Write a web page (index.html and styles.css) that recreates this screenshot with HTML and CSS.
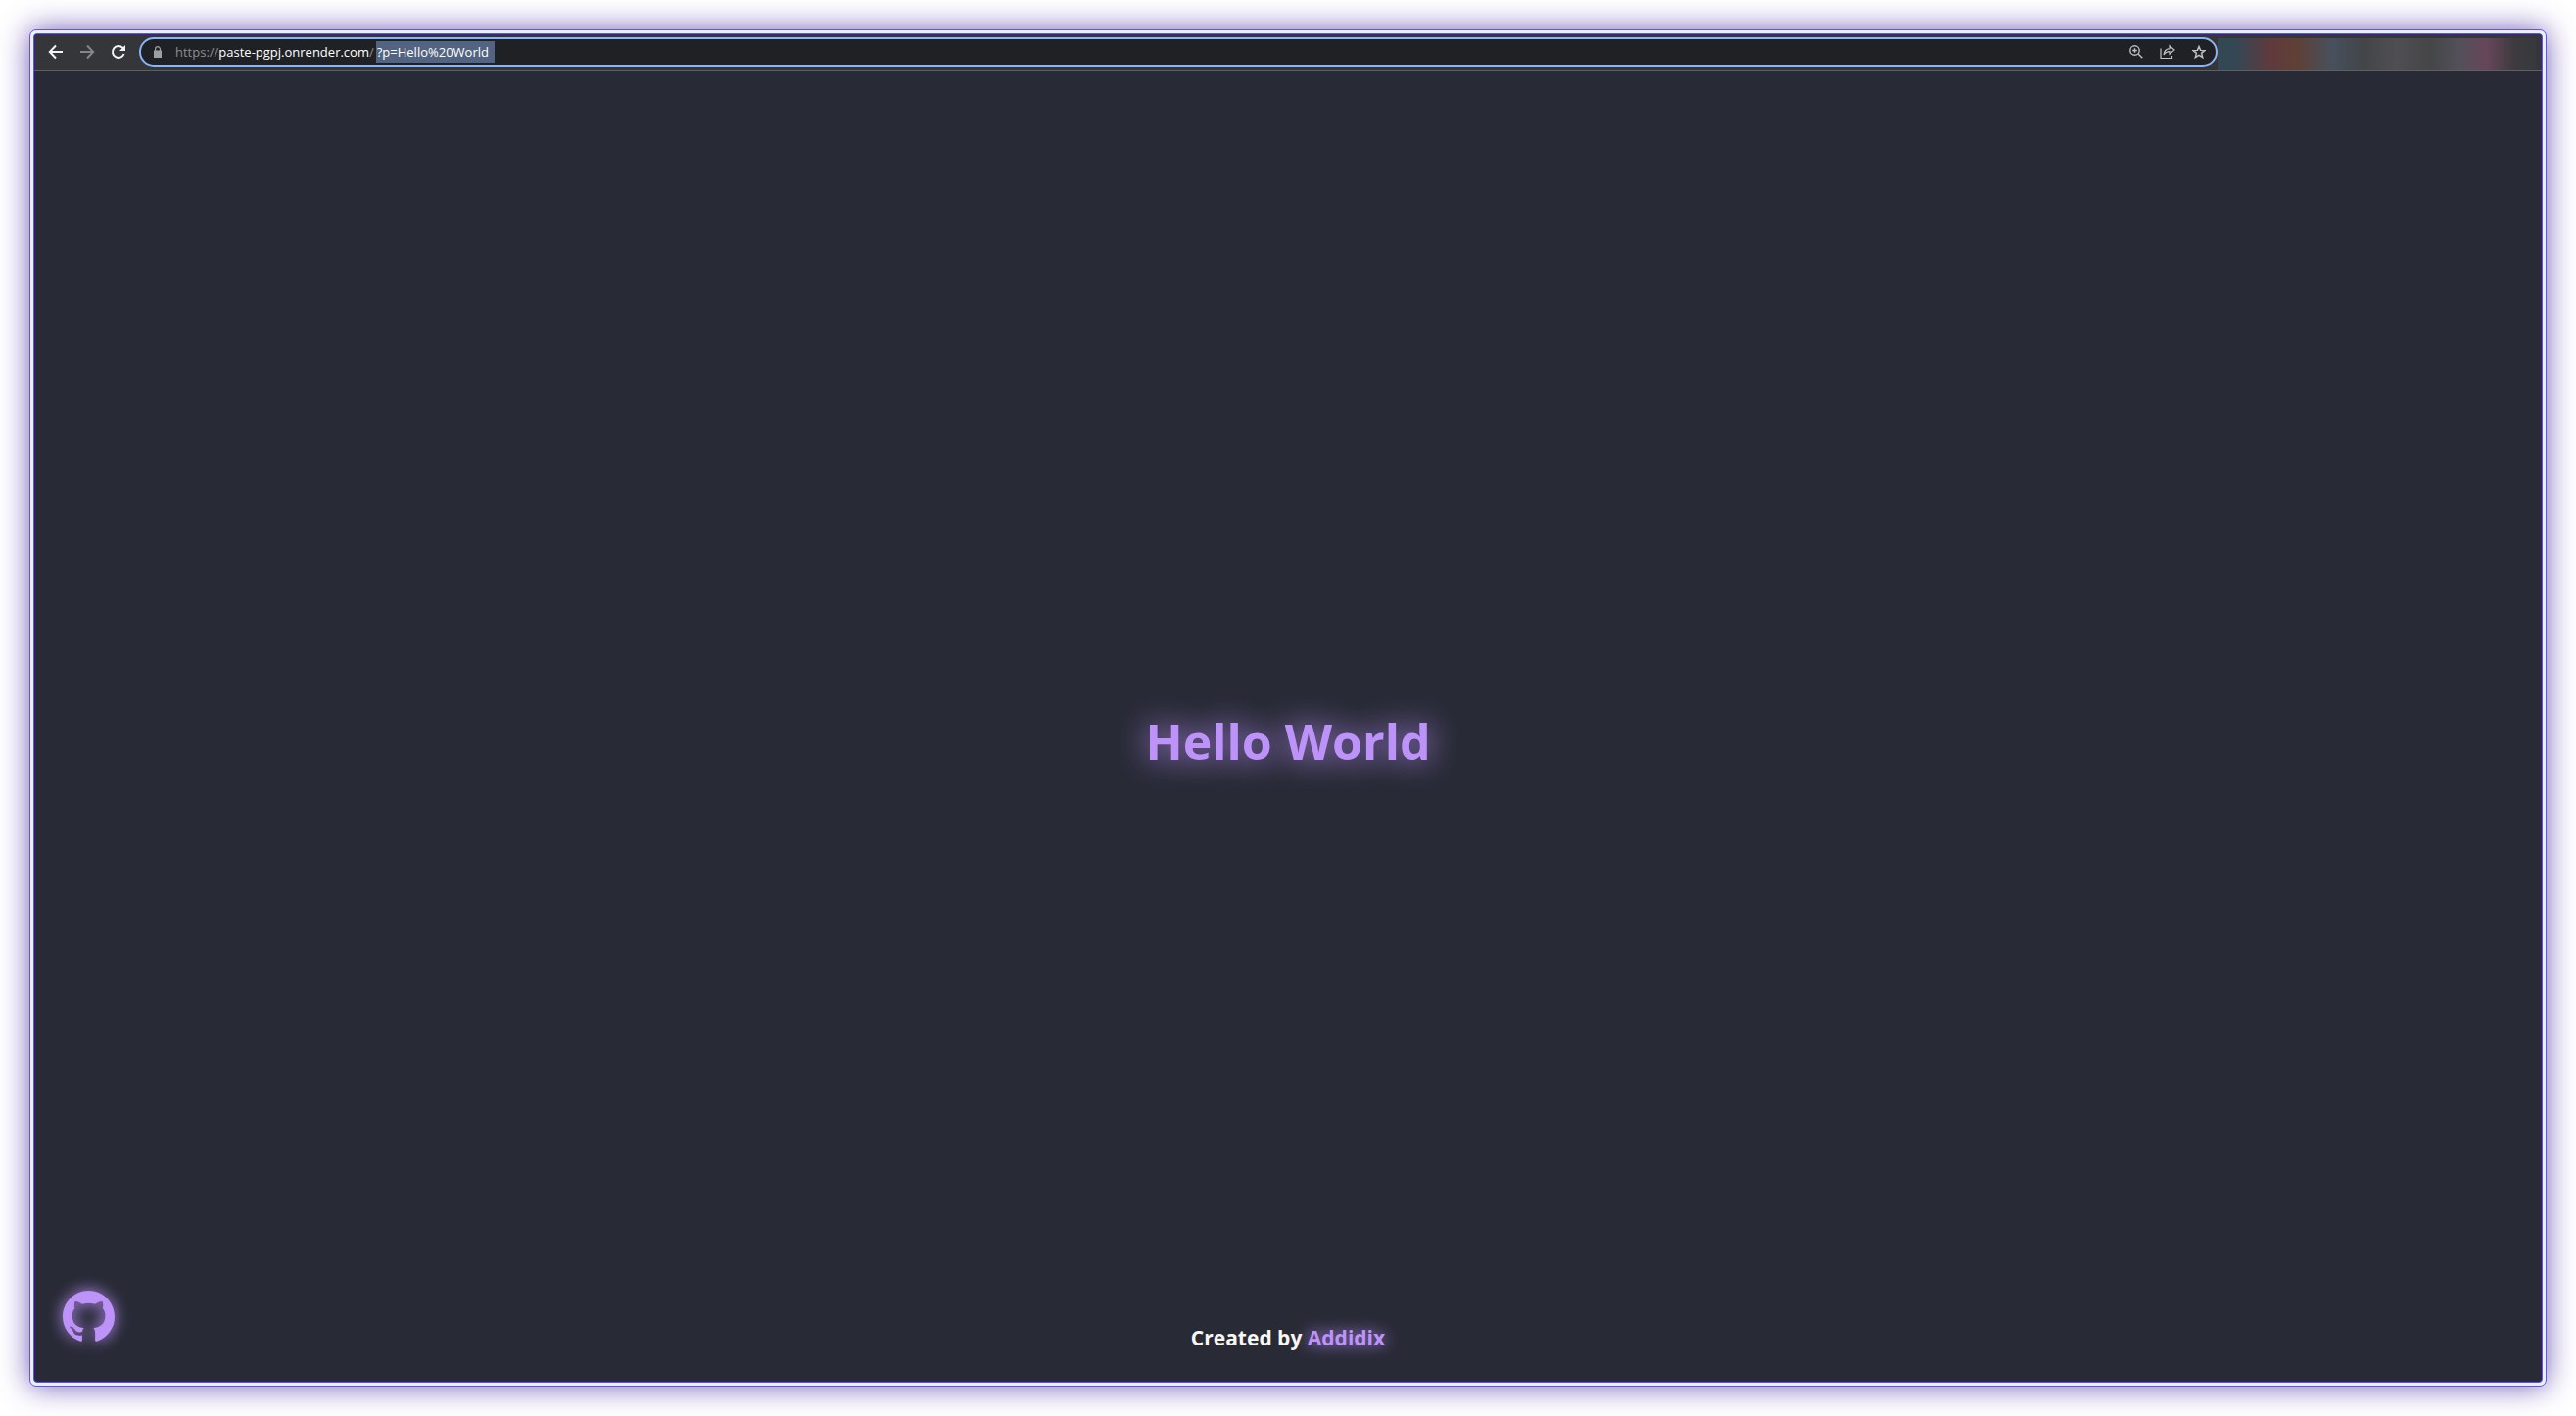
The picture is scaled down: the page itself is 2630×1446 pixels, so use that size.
FILE: index.html
```html
<!DOCTYPE html>
<html lang="en">
<head>
<meta charset="utf-8">
<title>Paste</title>
<link rel="stylesheet" href="styles.css">
</head>
<body>
<div class="frame">
  <div class="window">
    <header class="toolbar">
      <nav class="nav" aria-label="History">
        <button class="icon-button" type="button" aria-label="Back">
          <svg viewBox="0 0 16 16" width="16" height="16"><path d="M15 8H2M8 1.500 1.800 8 8 14.500" fill="none" stroke="currentColor" stroke-width="2"/></svg>
        </button>
        <button class="icon-button" type="button" aria-label="Forward" disabled>
          <svg viewBox="0 0 16 16" width="16" height="16"><path d="M1 8h13M8 1.500 14.200 8 8 14.500" fill="none" stroke="currentColor" stroke-width="2"/></svg>
        </button>
        <button class="icon-button" type="button" aria-label="Reload">
          <svg viewBox="0 0 16 16" width="16" height="16"><path d="M13.600 10A6 6 0 1 1 12.300 3.800L14 5.500" fill="none" stroke="currentColor" stroke-width="2"/><path d="M15 1v6H9z" fill="currentColor"/></svg>
        </button>
      </nav>
      <form class="address">
        <svg class="lock" viewBox="0 0 8 12" width="8" height="12"><path d="M1.600 5V3a2.400 2.400 0 0 1 4.800 0v2" fill="none" stroke="currentColor" stroke-width="1.200"/><path d="M0 4.500h8V12H0z" fill="currentColor"/></svg>
        <label class="origin" for="query">https://<span class="host">paste-pgpj.onrender.com</span>/</label>
        <input class="query" id="query" type="text" value="?p=Hello%20World">
        <button class="icon-button small" type="button" aria-label="Zoom">
          <svg viewBox="0 0 14 14" width="14" height="14"><g fill="none" stroke="currentColor" stroke-width="1.400"><circle cx="5.500" cy="5.500" r="4.700"/><path d="M9 9l4.300 4.300M5.500 3.200v4.600M3.200 5.500h4.600"/></g></svg>
        </button>
        <button class="icon-button small" type="button" aria-label="Share">
          <svg viewBox="0 0 16 16" width="16" height="16"><path d="M1 4.500v10h11.500V12" fill="none" stroke="currentColor" stroke-width="1.200"/><path d="M10 1.800l5 4.200-5 4.200V7.700C7 7.700 5.300 8.900 4 11c.3-3.500 2.300-6 6-6.400z" fill="none" stroke="currentColor" stroke-width="1.200"/></svg>
        </button>
        <button class="icon-button small" type="button" aria-label="Bookmark">
          <svg viewBox="0 0 14 14" width="14" height="14"><path d="M7 1.500l1.600 3.900 4.300.3-3.300 2.700 1.100 4.200L7 10.300l-3.700 2.300 1.100-4.200L1.100 5.700l4.300-.3z" fill="none" stroke="currentColor" stroke-width="1.500"/></svg>
        </button>
      </form>
      <div class="extensions"></div>
    </header>
    <main class="paste">
      <h1 class="title">Hello World</h1>
    </main>
    <footer class="footer">
      <a class="github" href="#" aria-label="GitHub">
        <svg viewBox="0 0 16 16" width="53" height="53"><path fill="currentColor" d="M8 0C3.580 0 0 3.580 0 8c0 3.540 2.290 6.530 5.470 7.590.4.070.55-.17.55-.38 0-.19-.01-.82-.01-1.490-2.010.37-2.530-.49-2.690-.94-.09-.23-.48-.94-.82-1.130-.28-.15-.68-.52-.01-.53.63-.01 1.080.58 1.230.82.72 1.210 1.870.87 2.330.66.070-.52.28-.87.51-1.070-1.780-.2-3.640-.89-3.640-3.950 0-.87.31-1.590.82-2.150-.08-.2-.36-1.020.08-2.120 0 0 .67-.21 2.200.82.64-.18 1.320-.27 2-.27s1.360.09 2 .27c1.530-1.040 2.200-.82 2.200-.82.44 1.100.16 1.920.08 2.120.51.56.82 1.270.82 2.150 0 3.070-1.870 3.750-3.650 3.950.29.25.54.73.54 1.480 0 1.070-.01 1.930-.01 2.200 0 .21.15.46.55.38A8.010 8.010 0 0 0 16 8c0-4.420-3.580-8-8-8z"/></svg>
      </a>
      <p class="credit">Created by <a class="author" href="#">Addidix</a></p>
    </footer>
  </div>
</div>
</body>
</html>
```
FILE: styles.css
```css
* {
  box-sizing: border-box;
}

body {
  margin: 0;
  min-height: 100vh;
  padding: 30px;
  display: flex;
  background: #fff;
  font-family: "Open Sans", sans-serif;
}

.frame {
  flex: 1;
  display: flex;
  padding: 3px;
  border: 1px solid #7645ff;
  border-radius: 7px;
  background: #e0f7fa;
  box-shadow: 0 0 30px rgb(80 55 167 / 80%);
}

.window {
  flex: 1;
  display: flex;
  flex-direction: column;
  border: 1px solid #7645ff;
  border-radius: 4px;
  overflow: hidden;
  background: #282a36;
}

.toolbar {
  display: flex;
  align-items: center;
  height: 37px;
  padding: 0 6px;
  border-bottom: 1px solid #5f6064;
  background: #35363a;
}

.nav {
  display: flex;
  padding: 0 5px 0 0;
}

.icon-button {
  display: flex;
  align-items: center;
  justify-content: center;
  width: 32px;
  height: 28px;
  padding: 0;
  border: 0;
  background: none;
  color: #f1f3f4;
}

.icon-button:disabled {
  color: #85868a;
}

.small {
  color: #bdc1c6;
}

.address {
  flex: 1;
  display: flex;
  align-items: center;
  height: 30px;
  padding: 0 1px 0 13px;
  border: 2px solid #8ab4f8;
  border-radius: 15px;
  background: #202124;
  font: 13px/22px "Open Sans", sans-serif;
}

.lock {
  color: #9aa0a6;
}

.origin {
  margin-left: 14px;
  color: #8b8e92;
}

.host {
  color: #fff;
}

.query {
  width: 121px;
  height: 22px;
  margin: 0 auto 0 2px;
  padding: 0 1px;
  border: 0;
  outline: 0;
  background: #536482;
  color: #fff;
  font: inherit;
}

.extensions {
  align-self: flex-end;
  width: 324px;
  height: 32px;
  margin-left: 1px;
  background: linear-gradient(90deg, #344754 0, #344754 18px, #603a3c 54px, #5f4036 80px, #47505d 116px, #434548 148px, #4f4f53 182px, #454648 216px, #54505a 246px, #67465a 274px, #3d3b3f 302px, #38393c 324px);
}

.paste {
  flex: 1;
  display: flex;
  align-items: center;
  justify-content: center;
  padding: 124px 32px 0;
}

.title {
  margin: 0;
  color: #bd93f9;
  font-size: 50px;
  line-height: 64px;
  font-weight: 700;
  text-shadow: 0 0 32px #bd93f9;
}

.footer {
  display: grid;
  grid-template-columns: 1fr auto 1fr;
  align-items: end;
  padding: 0 29px 31px;
}

.github {
  justify-self: start;
  height: 62px;
  color: #bd93f9;
}

.github svg {
  filter: drop-shadow(0 0 8px #bd93f9);
}

.credit {
  margin: 0;
  color: #f8f8f2;
  font-size: 21px;
  line-height: 28px;
  font-weight: 700;
}

.author {
  color: #bd93f9;
  text-decoration: none;
  text-shadow: 0 0 16px #bd93f9;
}
```
